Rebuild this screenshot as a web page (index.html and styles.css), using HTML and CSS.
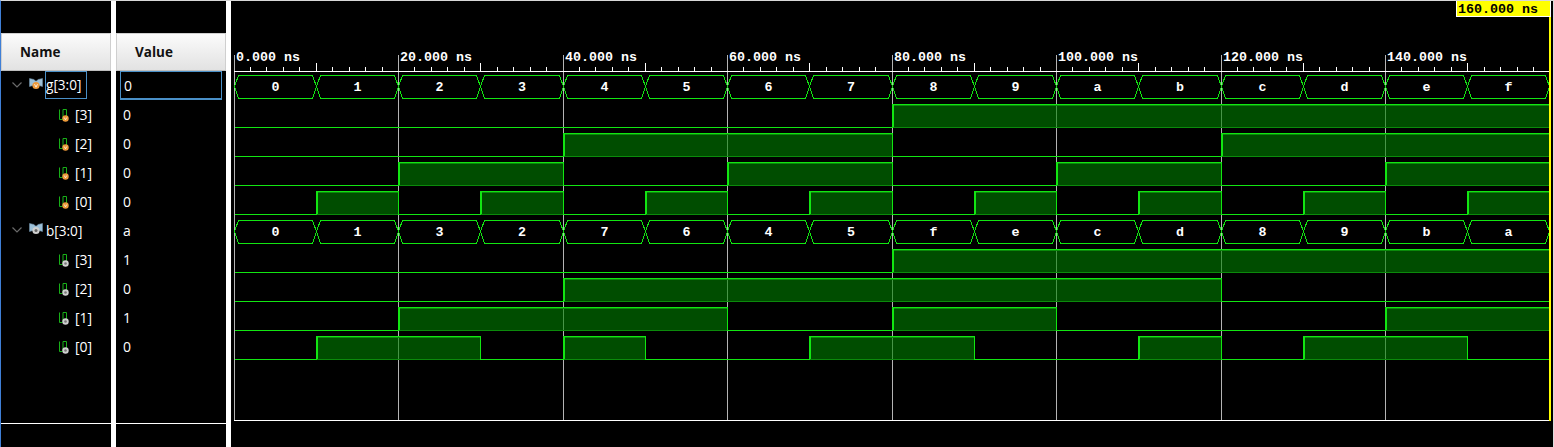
FILE: index.html
```html
<!DOCTYPE html>
<html lang="en">
<head>
<meta charset="utf-8">
<title>Waveform</title>
<link rel="stylesheet" href="styles.css">
</head>
<body>
<svg class="defs" width="0" height="0" aria-hidden="true">
  <defs>
    <symbol id="chev" viewBox="0 0 12 8"><path d="M1.500 1.500 6 6l4.500-4.500" fill="none" stroke="#6a6a6a" stroke-width="1.2"/></symbol>
    <symbol id="bus-o" viewBox="0 0 14 12">
      <path d="M0.500 0.500 5 1.500 6.500 3h1L9 1.500l4.500-1v8L10 7.500H4l-3.500 1z" fill="#9cc0d8" stroke="#6c8ca4" stroke-width=".6"/>
      <circle cx="7" cy="7.500" r="3.600" fill="#ee9a3a"/>
      <path d="M5.500 6.200l1.500 3 1.500-3" fill="none" stroke="#fff" stroke-width=".8"/>
    </symbol>
    <symbol id="bus-g" viewBox="0 0 14 12">
      <path d="M0.500 0.500 5 1.500 6.500 3h1L9 1.500l4.500-1v8L10 7.500H4l-3.500 1z" fill="#9cc0d8" stroke="#6c8ca4" stroke-width=".6"/>
      <circle cx="7" cy="7.500" r="3.600" fill="#cfcfcf"/>
      <circle cx="7" cy="7.500" r="1.500" fill="#666"/>
    </symbol>
    <symbol id="bit-o" viewBox="0 0 11 13">
      <path d="M1.500 0.500v10H4.500M5 10V0.500H8.500V7" fill="none" stroke="#18b018" stroke-width="1"/>
      <circle cx="7.500" cy="9.500" r="3.200" fill="#ee9a3a"/>
      <path d="M6.200 8.500l1.300 2.300 1.300-2.300" fill="none" stroke="#fff" stroke-width=".7"/>
    </symbol>
    <symbol id="bit-g" viewBox="0 0 11 13">
      <path d="M1.500 0.500v10H4.500M5 10V0.500H8.500V7" fill="none" stroke="#18b018" stroke-width="1"/>
      <circle cx="7.500" cy="9.500" r="3.200" fill="#cfcfcf"/>
      <circle cx="7.500" cy="9.500" r="1.300" fill="#777"/>
    </symbol>
  </defs>
</svg>
<div class="app">
  <section class="panel names">
    <div class="top"></div>
    <div class="head">Name</div>
    <div class="rows">
      <div class="row bus"><svg class="chev"><use href="#chev"/></svg><svg class="busicon"><use href="#bus-o"/></svg><span class="sel">g[3:0]</span></div>
      <div class="row bit"><svg class="biticon"><use href="#bit-o"/></svg><span>[3]</span></div>
      <div class="row bit"><svg class="biticon"><use href="#bit-o"/></svg><span>[2]</span></div>
      <div class="row bit"><svg class="biticon"><use href="#bit-o"/></svg><span>[1]</span></div>
      <div class="row bit"><svg class="biticon"><use href="#bit-o"/></svg><span>[0]</span></div>
      <div class="row bus"><svg class="chev"><use href="#chev"/></svg><svg class="busicon"><use href="#bus-g"/></svg><span class="plain">b[3:0]</span></div>
      <div class="row bit"><svg class="biticon"><use href="#bit-g"/></svg><span>[3]</span></div>
      <div class="row bit"><svg class="biticon"><use href="#bit-g"/></svg><span>[2]</span></div>
      <div class="row bit"><svg class="biticon"><use href="#bit-g"/></svg><span>[1]</span></div>
      <div class="row bit"><svg class="biticon"><use href="#bit-g"/></svg><span>[0]</span></div>
    </div>
    <div class="foot"></div>
  </section>
  <section class="panel values">
    <div class="top"></div>
    <div class="head">Value</div>
    <div class="rows">
      <div class="row val sel-val"><span>0</span></div>
      <div class="row val"><span>0</span></div>
      <div class="row val"><span>0</span></div>
      <div class="row val"><span>0</span></div>
      <div class="row val"><span>0</span></div>
      <div class="row val"><span>a</span></div>
      <div class="row val"><span>1</span></div>
      <div class="row val"><span>0</span></div>
      <div class="row val"><span>1</span></div>
      <div class="row val"><span>0</span></div>
    </div>
    <div class="foot"></div>
  </section>
  <section class="wave">
    <svg id="wave" class="wavesvg" viewBox="231 1 1323 446" width="1323" height="446"></svg>
  </section>
</div>
<script src="script.js"></script>
</body>
</html>
```
FILE: styles.css
```css
* { box-sizing: border-box; }
html, body { margin: 0; height: 100%; background: #fff; overflow: hidden; }
.defs { position: absolute; }
.app {
  display: flex;
  height: 447px;
  width: 1554px;
  background: #fff;
  border-top: 1px solid #d8d8d8;
  border-left: 1px solid #3f7fd6;
  font-family: "Open Sans", "Noto Sans", sans-serif;
  color: #fff;
}
.panel { display: flex; flex-direction: column; width: 110px; background: #000; }
.values { margin-left: 5px; }
.top { height: 32px; }
.head {
  height: 38px;
  display: flex;
  align-items: center;
  background: linear-gradient(#fbfbfb, #e2e2e2);
  border: 1px solid #cfcfcf;
  border-bottom-color: #bdbdbd;
  color: #111;
  font-size: 13.5px;
  font-weight: 700;
  padding-left: 18px;
}
.values .head { padding-left: 18px; }
.rows { height: 352px; display: flex; flex-direction: column; }
.row { height: 29px; flex: none; display: flex; align-items: center; font-size: 14px; }
.foot { flex: 1; border-top: 1px solid #fff; }
.bus { padding-left: 10px; }
.chev { width: 12px; height: 8px; margin-top: -2px; }
.busicon { width: 14px; height: 12px; margin-left: 6px; margin-top: -4px; }
.sel {
  height: 28px;
  line-height: 26px;
  margin-left: 2px;
  padding: 0;
  width: 42px;
  font-size: 13.6px;
  border: 1px solid #4a90c8;
  align-self: flex-start;
}
.plain { margin-left: 3px; font-size: 13.6px; }
.bit { padding-left: 57px; }
.biticon { width: 11px; height: 13px; margin-top: 1px; }
.bit span { margin-left: 6px; }
.val { padding-left: 7px; }
.sel-val {
  height: 29px;
  margin-left: 4px;
  margin-right: 4px;
  padding-left: 3px;
  border: 1px solid #4a90c8;
  border-bottom-width: 2px;
}
.wave { margin-left: 5px; flex: none; width: 1323px; background: #000; }
.wavesvg { display: block; shape-rendering: crispEdges; }
.time { font: bold 13.33px "Liberation Mono", monospace; fill: #fff; }
.cursor-time { font: bold 13.33px "Liberation Mono", monospace; fill: #000; }
.busval { font: bold 13.33px "Liberation Mono", monospace; fill: #fff; text-anchor: middle; }
```
FILE: script.js
```js
const NS = "http://www.w3.org/2000/svg";
const svg = document.getElementById("wave");
const X0 = 234.01, STEP = 8.225;
const GREEN = "#12e612", GRID = "#b4b4b4", DIM = "#0b8a0b";
const x = t => Math.floor(X0 + t * STEP) + 0.5;

function el(name, attrs, text) {
  const n = document.createElementNS(NS, name);
  for (const k in attrs) n.setAttribute(k, attrs[k]);
  if (text !== undefined) n.textContent = text;
  svg.appendChild(n);
  return n;
}
const line = (x1, y1, x2, y2, stroke) => el("line", { x1, y1, x2, y2, stroke, "stroke-width": 1 });

/* grid and ruler */
for (let t = 0; t <= 140; t += 20) {
  line(x(t), 55, x(t), 420, GRID);
  el("text", { class: "time", x: x(t) + 1.5, y: 61 }, t.toFixed(3) + " ns");
}
line(234, 71.5, 1550, 71.5, "#fff");
line(234, 420.5, 1550, 420.5, "#fff");
for (let t = 2; t < 160; t += 2) {
  if (t % 20 === 0) continue;
  line(x(t), t % 10 === 0 ? 63 : 67, x(t), 71, "#fff");
}

/* waveforms */
const values = [
  [0,1,2,3,4,5,6,7,8,9,10,11,12,13,14,15],
  [0,1,3,2,7,6,4,5,15,14,12,13,8,9,11,10],
];
function bus(top, vals) {
  const bot = top + 23, mid = top + 11.5;
  vals.forEach((v, i) => {
    const a = x(i * 10), b = i === 15 ? 1549.5 : x((i + 1) * 10);
    const pts = [[a, mid], [a + 4, top + 0.5], [b - 4, top + 0.5], [b, mid], [b - 4, bot + 0.5], [a + 4, bot + 0.5]];
    el("polygon", { points: pts.join(" "), fill: "none", stroke: GREEN, "stroke-width": 1 });
    el("text", { class: "busval", x: (a + b) / 2, y: mid + 4.5 }, v.toString(16));
  });
}
function bit(low, vals, b) {
  const high = low - 23;
  let i = 0;
  while (i < 16) {
    const on = (vals[i] >> b) & 1;
    let j = i;
    while (j < 16 && ((vals[j] >> b) & 1) === on) j++;
    const a = x(i * 10), e = j === 16 ? 1549.5 : x(j * 10);
    if (on) {
      el("rect", { x: a, y: high, width: e - a, height: 23, fill: "#008000", "fill-opacity": 0.6 });
      line(a, low + 0.5, e, low + 0.5, DIM);
      line(a, high + 1.5, e, high + 1.5, DIM);
      line(a, high + 0.5, e, high + 0.5, GREEN);
      if (i > 0) {
        line(a, high, a, low + 1, GREEN);
        line(a + 1, high + 1, a + 1, low, GREEN);
      }
      if (j < 16) line(e, high, e, low + 1, GREEN);
    } else {
      line(a, low + 0.5, e, low + 0.5, GREEN);
    }
    i = j;
  }
}
bus(75, values[0]);
[127, 156, 185, 214].forEach((y, n) => bit(y, values[0], 3 - n));
bus(220, values[1]);
[272, 301, 330, 359].forEach((y, n) => bit(y, values[1], 3 - n));

/* cursor */
el("rect", { x: 1549, y: 0, width: 2, height: 421, fill: "#ff0" });
el("rect", { x: 1456, y: 1, width: 95, height: 16, fill: "#fff" });
el("rect", { x: 1457, y: 1, width: 93, height: 15, fill: "#ff0" });
el("text", { class: "cursor-time", x: 1458, y: 13 }, "160.000 ns");
el("rect", { x: 1553, y: 0, width: 1, height: 447, fill: "#dcdcdc" });
```
